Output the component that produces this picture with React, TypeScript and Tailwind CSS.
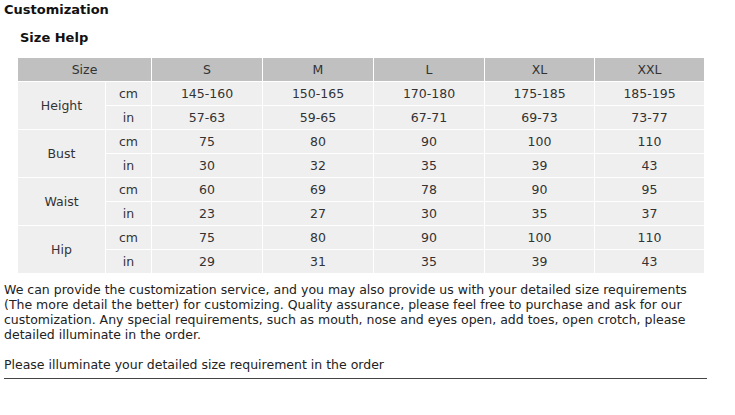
const sizes = ["S", "M", "L", "XL", "XXL"];

const rows = [
  { label: "Height", cm: ["145-160", "150-165", "170-180", "175-185", "185-195"], inch: ["57-63", "59-65", "67-71", "69-73", "73-77"] },
  { label: "Bust", cm: ["75", "80", "90", "100", "110"], inch: ["30", "32", "35", "39", "43"] },
  { label: "Waist", cm: ["60", "69", "78", "90", "95"], inch: ["23", "27", "30", "35", "37"] },
  { label: "Hip", cm: ["75", "80", "90", "100", "110"], inch: ["29", "31", "35", "39", "43"] },
];

const cell = "border border-white h-[24px] p-0 text-center align-middle";

export default function App() {
  return (
    <div className="w-[735px] h-[415px] bg-white text-[#333] text-[12.5px] leading-[15px] overflow-hidden" style={{ fontFamily: "Verdana, 'DejaVu Sans', sans-serif" }}>
      <h1 className="pl-[4px] pt-[2px] font-bold text-[13px] leading-[16px] text-[#111]">Customization</h1>
      <h2 className="pl-[20px] pt-[12px] font-bold text-[13px] leading-[16px] text-[#111]">Size Help</h2>

      <table className="ml-[17px] mt-[11px] w-[687px] table-fixed border-collapse">
        <colgroup>
          <col className="w-[88px]" />
          <col className="w-[46px]" />
          <col className="w-[111px]" />
          <col className="w-[111px]" />
          <col className="w-[111px]" />
          <col className="w-[110px]" />
          <col className="w-[110px]" />
        </colgroup>
        <thead>
          <tr className="bg-[#c0c0c0]">
            <th colSpan={2} className={`${cell} font-normal`}>Size</th>
            {sizes.map((s) => (
              <th key={s} className={`${cell} font-normal`}>{s}</th>
            ))}
          </tr>
        </thead>
        <tbody className="bg-[#f0eff0]">
          {rows.map((r) => (
            <>
              <tr key={r.label + "cm"}>
                <td rowSpan={2} className={cell}>{r.label}</td>
                <td className={cell}>cm</td>
                {r.cm.map((v, i) => (
                  <td key={i} className={cell}>{v}</td>
                ))}
              </tr>
              <tr key={r.label + "in"}>
                <td className={cell}>in</td>
                {r.inch.map((v, i) => (
                  <td key={i} className={cell}>{v}</td>
                ))}
              </tr>
            </>
          ))}
        </tbody>
      </table>

      <p className="pl-[4px] pr-[20px] mt-[8px] text-[#222]">
        We can provide the customization service, and you may also provide us with your detailed size requirements
        (The more detail the better) for customizing. Quality assurance, please feel free to purchase and ask for our
        customization. Any special requirements, such as mouth, nose and eyes open, add toes, open crotch, please
        detailed illuminate in the order.
      </p>
      <p className="pl-[4px] mt-[15px] text-[#222]">Please illuminate your detailed size requirement in the order</p>
      <div className="ml-[4px] mt-[6px] w-[703px] h-[1px] bg-[#444]" />
    </div>
  );
}
